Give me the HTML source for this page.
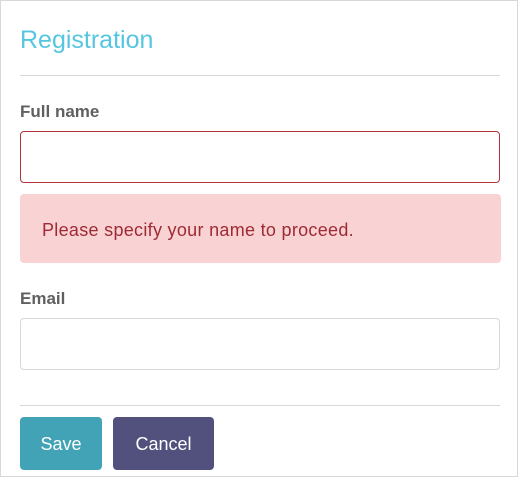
<!DOCTYPE html>
<html><head><style>
body{margin:0;width:518px;height:477px;overflow:hidden;background:#fff;font-family:"Liberation Sans",sans-serif;}
.frame{position:absolute;left:0;top:0;width:516px;height:475px;border:1px solid #d8d8d8;}
.a{position:absolute;}
</style></head><body>
<div class="frame"></div>
<div class="a" style="left:20px;top:26px;font-size:25px;color:#56c6e0;">Registration</div>
<div class="a" style="left:20px;top:75px;width:480px;height:1px;background:#d8d8d8"></div>
<div class="a" style="left:20px;top:102px;font-size:17px;font-weight:bold;color:#606060;">Full name</div>
<div class="a" style="left:20px;top:131px;width:478px;height:50px;border:1px solid #b0343a;border-radius:4px;"></div>
<div class="a" style="left:20px;top:194px;width:481px;height:69px;background:#f9d2d4;border-radius:4px;"></div>
<div class="a" style="left:42px;top:220px;font-size:18px;letter-spacing:0.3px;color:#9e2a33;">Please specify your name to proceed.</div>
<div class="a" style="left:20px;top:289px;font-size:17px;font-weight:bold;color:#606060;">Email</div>
<div class="a" style="left:20px;top:318px;width:478px;height:50px;border:1px solid #d8d8d8;border-radius:4px;"></div>
<div class="a" style="left:20px;top:405px;width:480px;height:1px;background:#d8d8d8"></div>
<div class="a" style="left:20px;top:417px;width:82px;height:53px;background:#42a3b6;border-radius:4px;color:#fff;font-size:18px;line-height:55px;text-align:center;">Save</div>
<div class="a" style="left:113px;top:417px;width:101px;height:53px;background:#52517d;border-radius:4px;color:#fff;font-size:18px;line-height:55px;text-align:center;">Cancel</div>
</body></html>
